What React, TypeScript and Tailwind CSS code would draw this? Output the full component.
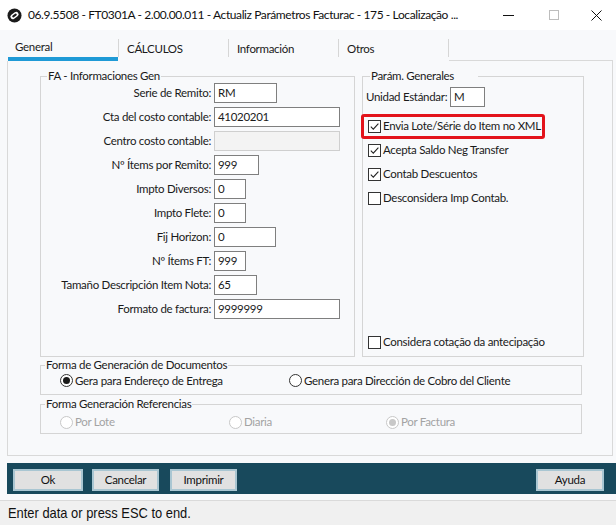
import React from "react";

const fields = [
  { label: "Serie de Remito:", value: "RM", w: "w-[63px]" },
  { label: "Cta del costo contable:", value: "41020201", w: "w-[126px]" },
  { label: "Centro costo contable:", value: "", w: "w-[126px]", disabled: true },
  { label: "Nº Ítems por Remito:", value: "999", w: "w-[45px]" },
  { label: "Impto Diversos:", value: "0", w: "w-[32px]" },
  { label: "Impto Flete:", value: "0", w: "w-[32px]" },
  { label: "Fij Horizon:", value: "0", w: "w-[62px]" },
  { label: "Nº Ítems FT:", value: "999", w: "w-[32px]" },
  { label: "Tamaño Descripción Item Nota:", value: "65", w: "w-[43px]" },
  { label: "Formato de factura:", value: "9999999", w: "w-[126px]" },
];

const tabs = ["General", "CÁLCULOS", "Información", "Otros"];

function Logo() {
  return (
    <svg width="15" height="15" viewBox="0 0 16 16">
      <circle cx="8" cy="8" r="7.5" fill="#1b1b1b" />
      <rect x="3.2" y="5.4" width="9.6" height="5.2" rx="2.6" fill="#fff" transform="rotate(-35 8 8)" />
      <rect x="5.3" y="6.9" width="5.4" height="2.2" rx="1.1" fill="#1b1b1b" transform="rotate(-35 8 8)" />
    </svg>
  );
}

function Field({ value, w, disabled }: { value: string; w: string; disabled?: boolean }) {
  return (
    <div
      className={`${w} h-[20px] flex items-center px-[3px] border ${
        disabled ? "border-[#cfcfcf] bg-[#f3f3f3]" : "border-[#7f7f7f] bg-white"
      }`}
    >
      {value}
    </div>
  );
}

function Check({ checked, label }: { checked?: boolean; label: string }) {
  return (
    <div className="flex items-center h-[24px] pl-[5px]">
      <span className="w-[13px] h-[13px] border border-[#333] bg-white flex items-center justify-center">
        {checked ? (
          <svg width="11" height="11" viewBox="0 0 11 11">
            <polyline points="1.8,5.6 4.3,8.1 9.4,2.6" fill="none" stroke="#222" strokeWidth="1.1" />
          </svg>
        ) : null}
      </span>
      <span className="ml-[2px] whitespace-nowrap">{label}</span>
    </div>
  );
}

function Radio({ checked, disabled, label, w }: { checked?: boolean; disabled?: boolean; label: string; w?: string }) {
  return (
    <div className={`flex items-center ${w ?? ""}`}>
      <span
        className={`w-[13px] h-[13px] rounded-full border flex items-center justify-center bg-white ${
          disabled ? "border-[#c8c8c8]" : "border-[#333]"
        }`}
      >
        {checked ? (
          <span className={`w-[7px] h-[7px] rounded-full ${disabled ? "bg-[#c8c8c8]" : "bg-[#1a1a1a]"}`} />
        ) : null}
      </span>
      <span className={`ml-[2px] whitespace-nowrap ${disabled ? "text-[#a3a3a3]" : ""}`}>{label}</span>
    </div>
  );
}

function Button({ label, w }: { label: string; w: string }) {
  return (
    <div className={`${w} h-[22px] flex items-center justify-center bg-[#e1e1e1] border-2 border-[#a9c6d2] text-[#111]`}>
      {label}
    </div>
  );
}

export default function App() {
  return (
    <div className="w-[616px] h-[525px] flex flex-col overflow-hidden bg-[#f8f9fb] font-['Lato','Noto_Sans',sans-serif] text-[11.5px] tracking-[-0.3px] text-[#1a1a1a]">
      {/* title bar */}
      <div className="h-[30px] shrink-0 flex items-center bg-white">
        <div className="ml-[7px] flex items-center shrink-0">
          <Logo />
        </div>
        <span className="ml-[6px] flex-1 min-w-0 whitespace-nowrap text-[12px] tracking-[-0.4px] text-[#111]">
          06.9.5508 - FT0301A - 2.00.00.011 - Actualiz Parámetros Facturac - 175 - Localização ...
        </span>
        <div className="flex shrink-0">
          <div className="w-[45px] h-[30px] flex items-center justify-center">
            <span className="w-[11px] h-px bg-[#111]" />
          </div>
          <div className="w-[45px] h-[30px] flex items-center justify-center">
            <span className="w-[10px] h-[10px] border border-[#bdbdbd]" />
          </div>
          <div className="w-[40px] h-[30px] flex items-center justify-center">
            <svg width="11" height="11" viewBox="0 0 11 11">
              <path d="M0.5 0.5 L10.5 10.5 M10.5 0.5 L0.5 10.5" stroke="#111" strokeWidth="1" />
            </svg>
          </div>
        </div>
      </div>

      {/* tabs */}
      <div className="h-[31px] shrink-0 flex items-stretch pl-[8px]">
        {tabs.map((t, i) => (
          <React.Fragment key={t}>
            <div
              className={`flex items-center pt-[6px] ${i === 0 ? "w-[110px] pl-[7px] border-b-4 border-[#1f9ad6]" : "w-[109px] pl-[8px]"}`}
            >
              {t}
            </div>
            <div className="w-px self-end mb-[4px] h-[18px] bg-[#d6d6d6]" />
          </React.Fragment>
        ))}
        <div className="flex-1 mr-[3px] border-b border-[#d9d9d9]" />
      </div>

      {/* panel */}
      <div className="h-[395px] shrink-0 ml-[7px] mr-[3px] border-l border-r border-b border-[#d9d9d9] pt-[8px] pl-[32px]">
        <div className="flex">
          <fieldset className="w-[315px] h-[288px] min-w-0 border border-[#d5d5d5]">
            <legend className="ml-[6px] px-[1px] leading-[14px]">FA - Informaciones Gen</legend>
            <div className="flex flex-col gap-[4px]">
              {fields.map((f) => (
                <div key={f.label} className="flex items-center">
                  <span className="w-[170px] text-right whitespace-nowrap">{f.label}</span>
                  <div className="ml-[3px]">
                    <Field value={f.value} w={f.w} disabled={f.disabled} />
                  </div>
                </div>
              ))}
            </div>
          </fieldset>

          <fieldset className="ml-[7px] w-[222px] h-[288px] min-w-0 border border-[#d5d5d5]">
            <legend className="ml-[7px] pl-[1px] pr-[24px] leading-[14px]">Parám. Generales</legend>
            <div className="h-[273px] flex flex-col pb-[2px]">
              <div className="mt-[4px] flex items-center pl-[3px]">
                <span className="w-[83px] whitespace-nowrap">Unidad Estándar:</span>
                <div className="ml-[1px]">
                  <Field value="M" w="w-[35px]" />
                </div>
              </div>
              <div className="mt-[7px] relative">
                <Check checked label="Envia Lote/Série do Item no XML" />
                <span className="absolute left-[-2px] top-0 w-[184px] h-[25px] border-[3px] border-[#e3131b] rounded-[3px]" />
              </div>
              <Check checked label="Acepta Saldo Neg Transfer" />
              <Check checked label="Contab Descuentos" />
              <Check label="Desconsidera Imp Contab." />
              <div className="mt-auto">
                <Check label="Considera cotação da antecipação" />
              </div>
            </div>
          </fieldset>
        </div>

        <fieldset className="mt-[1px] w-[542px] min-w-0 border border-[#d5d5d5]">
          <legend className="ml-[4px] px-[1px] leading-[14px]">Forma de Generación de Documentos</legend>
          <div className="h-[22px] flex items-start pl-[19px]">
            <Radio checked label="Gera para Endereço de Entrega" w="w-[229px]" />
            <Radio label="Genera para Dirección de Cobro del Cliente" />
          </div>
        </fieldset>

        <fieldset className="mt-[2px] w-[542px] min-w-0 border border-[#d5d5d5]">
          <legend className="ml-[4px] px-[1px] leading-[14px]">Forma Generación Referencias</legend>
          <div className="h-[22px] flex items-center pl-[19px]">
            <Radio disabled label="Por Lote" w="w-[169px]" />
            <Radio disabled label="Diaria" w="w-[157px]" />
            <Radio disabled checked label="Por Factura" />
          </div>
        </fieldset>
      </div>

      {/* buttons */}
      <div className="mt-[7px] h-[31px] shrink-0 ml-[7px] bg-[#18495c] flex items-start pt-[6px] pl-[6px] pr-[12px]">
        <Button label="Ok" w="w-[70px]" />
        <div className="ml-[9px]">
          <Button label="Cancelar" w="w-[67px]" />
        </div>
        <div className="ml-[11px]">
          <Button label="Imprimir" w="w-[67px]" />
        </div>
        <div className="ml-auto">
          <Button label="Ayuda" w="w-[68px]" />
        </div>
      </div>

      {/* status bar */}
      <div className="mt-[6px] flex-1 border-t border-[#dadada] bg-[#f0f0f0] pl-[8px] pt-[3px]">
        <span className="inline-block origin-left scale-x-[0.86] whitespace-nowrap font-['Liberation_Sans',Arial,sans-serif] text-[15px] leading-[17px] tracking-normal text-[#111]">
          Enter data or press ESC to end.
        </span>
      </div>
    </div>
  );
}
